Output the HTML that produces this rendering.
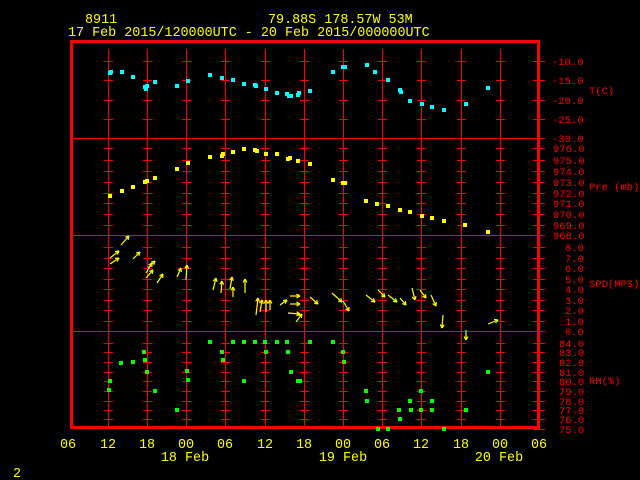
<!DOCTYPE html>
<html><head><meta charset="utf-8"><style>
html,body{margin:0;padding:0;background:#000;width:640px;height:480px;overflow:hidden}
svg{position:absolute;left:0;top:0}
text{font-family:"Liberation Mono",monospace}
.y{fill:#ffff00;font-size:13.4px}
.r{fill:#ff0000;font-size:10.5px}
rect{shape-rendering:crispEdges}
</style></head><body>
<svg id="s" width="640" height="480" xmlns="http://www.w3.org/2000/svg">
<text class="y" x="85" y="23">8911</text>
<text class="y" x="268" y="23">79.88S  178.57W    53M</text>
<text class="y" x="68" y="36">17 Feb 2015/120000UTC - 20 Feb 2015/000000UTC</text>
<g class="y" text-anchor="middle">
<text x="68" y="448">06</text><text x="108" y="448">12</text><text x="147" y="448">18</text><text x="186" y="448">00</text><text x="225" y="448">06</text><text x="265" y="448">12</text><text x="304" y="448">18</text><text x="343" y="448">00</text><text x="382" y="448">06</text><text x="421" y="448">12</text><text x="461" y="448">18</text><text x="500" y="448">00</text><text x="539" y="448">06</text>
<text x="185" y="461">18 Feb</text><text x="343" y="461">19 Feb</text><text x="499" y="461">20 Feb</text>
</g>
<text class="y" x="13" y="477">2</text>
<g class="r">
<text x="552" y="65">-10.0</text><text x="552" y="84">-15.0</text><text x="552" y="104">-20.0</text><text x="552" y="123">-25.0</text><text x="552" y="142">-30.0</text>
<text x="553" y="152">976.0</text><text x="553" y="164">975.0</text><text x="553" y="175">974.0</text><text x="553" y="186">973.0</text><text x="553" y="197">972.0</text><text x="553" y="207">971.0</text><text x="553" y="218">970.0</text><text x="553" y="229">969.0</text><text x="553" y="239">968.0</text>
<text x="565" y="251">8.0</text><text x="565" y="262">7.0</text><text x="565" y="272">6.0</text><text x="565" y="283">5.0</text><text x="565" y="293">4.0</text><text x="565" y="304">3.0</text><text x="565" y="314">2.0</text><text x="565" y="325">1.0</text><text x="565" y="335">0.0</text>
<text x="559" y="347">84.0</text><text x="559" y="356">83.0</text><text x="559" y="366">82.0</text><text x="559" y="376">81.0</text><text x="559" y="385">80.0</text><text x="559" y="395">79.0</text><text x="559" y="405">78.0</text><text x="559" y="414">77.0</text><text x="559" y="423">76.0</text><text x="559" y="433">75.0</text>
<text x="589" y="94">T(C)</text><text x="589" y="190">Pre (mb)</text><text x="589" y="287">SPD(MPS)</text><text x="589" y="384">RH(%)</text>
</g>
<g id="g"></g>
</svg>
<script>
var g=document.getElementById('g'),NS='http://www.w3.org/2000/svg';
function el(t,a){var e=document.createElementNS(NS,t);for(var k in a)e.setAttribute(k,a[k]);g.appendChild(e);return e;}
function rc(x,y,w,h,c){el('rect',{x:x,y:y,width:w,height:h,fill:c});}
function ln(x1,y1,x2,y2,c,w){el('line',{x1:x1,y1:y1,x2:x2,y2:y2,stroke:c,'stroke-width':w||1});}
var R='#ff0000';
var xs=[108,147,186,225,265,304,343,382,421,461,500];
var ys=[61,80,100,119,148,160,171,182,193,203,214,225,247,258,268,279,289,300,310,321,343,352,362,372,381,391,401,410,419];
xs.forEach(function(x){rc(x,49,1,377,R);ys.forEach(function(y){rc(x-4,y,9,1,R);});});
ys.concat([138,235,331,429]).forEach(function(y){rc(533,y,12,1,R);});
rc(70,138,469,1,R);rc(70,235,469,1,R);rc(70,331,469,1,R);
rc(70,40,470,3,R);rc(70,426,470,3,R);rc(70,40,3,389,R);rc(537,40,3,389,R);
function pts(a,c){a.forEach(function(p){rc(p[0]-2,p[1]-2,4,4,c);});}
pts([[110,73],[111,72],[122,72],[133,77],[145,87],[146,89],[147,86],[155,82],[177,86],[188,81],[210,75],[222,78],[233,80],[244,84],[255,85],[256,86],[266,89],[277,93],[287,94],[289,96],[291,96],[298,95],[299,93],[310,91],[333,72],[343,67],[345,67],[367,65],[375,72],[388,80],[400,90],[401,92],[410,101],[422,104],[432,107],[444,110],[466,104],[488,88]],'#00ffff');
pts([[110,196],[122,191],[133,187],[145,182],[147,181],[155,178],[177,169],[188,163],[210,157],[222,156],[223,154],[233,152],[244,149],[255,150],[257,151],[266,154],[277,154],[288,159],[290,158],[298,161],[310,164],[333,180],[343,183],[345,183],[366,201],[377,204],[388,206],[400,210],[410,212],[422,216],[432,218],[444,221],[465,225],[488,232]],'#ffff00');
pts([[110,381],[109,390],[121,363],[133,362],[144,352],[145,360],[147,372],[155,391],[177,410],[187,371],[188,380],[210,342],[222,352],[223,360],[233,342],[244,342],[244,381],[255,342],[265,342],[266,352],[277,342],[287,342],[288,352],[291,372],[298,381],[300,381],[310,342],[333,342],[343,352],[344,362],[366,391],[367,401],[378,429],[388,429],[399,410],[400,419],[410,401],[411,410],[421,391],[421,410],[432,401],[432,410],[444,429],[466,410],[488,372]],'#00ff00');
var A=[[121,245,129,236],[110,258,119,251],[110,264,119,258],[133,259,140,252],[146,273,152,263],[148,268,155,261],[146,278,153,270],[157,283,163,274],[177,277,181,268],[186,280,187,265],[213,290,216,278],[221,293,222,281],[230,289,232,277],[233,297,233,287],[245,293,245,279],[256,315,258,298],[260,312,262,300],[266,312,266,300],[270,310,270,300],[280,305,287,300],[290,296,300,296],[290,304,300,304],[288,313,300,314],[296,322,302,314],[310,297,318,304],[332,293,342,302],[343,301,349,311],[366,295,375,302],[378,290,385,297],[388,295,397,302],[400,298,406,305],[412,288,415,300],[420,290,426,298],[431,295,436,306],[443,315,442,328],[466,330,466,340],[488,324,498,320]];
A.forEach(function(a){var Y='#ffff00';ln(a[0],a[1],a[2],a[3],Y,1.2);var dx=a[2]-a[0],dy=a[3]-a[1],L=Math.hypot(dx,dy),ux=dx/L,uy=dy/L,h=4;
[.5,-.5].forEach(function(s){var c=Math.cos(s),n=Math.sin(s);var vx=-(ux*c-uy*n),vy=-(ux*n+uy*c);ln(a[2],a[3],a[2]+vx*h,a[3]+vy*h,Y,1.2);});});
</script>
</body></html>
